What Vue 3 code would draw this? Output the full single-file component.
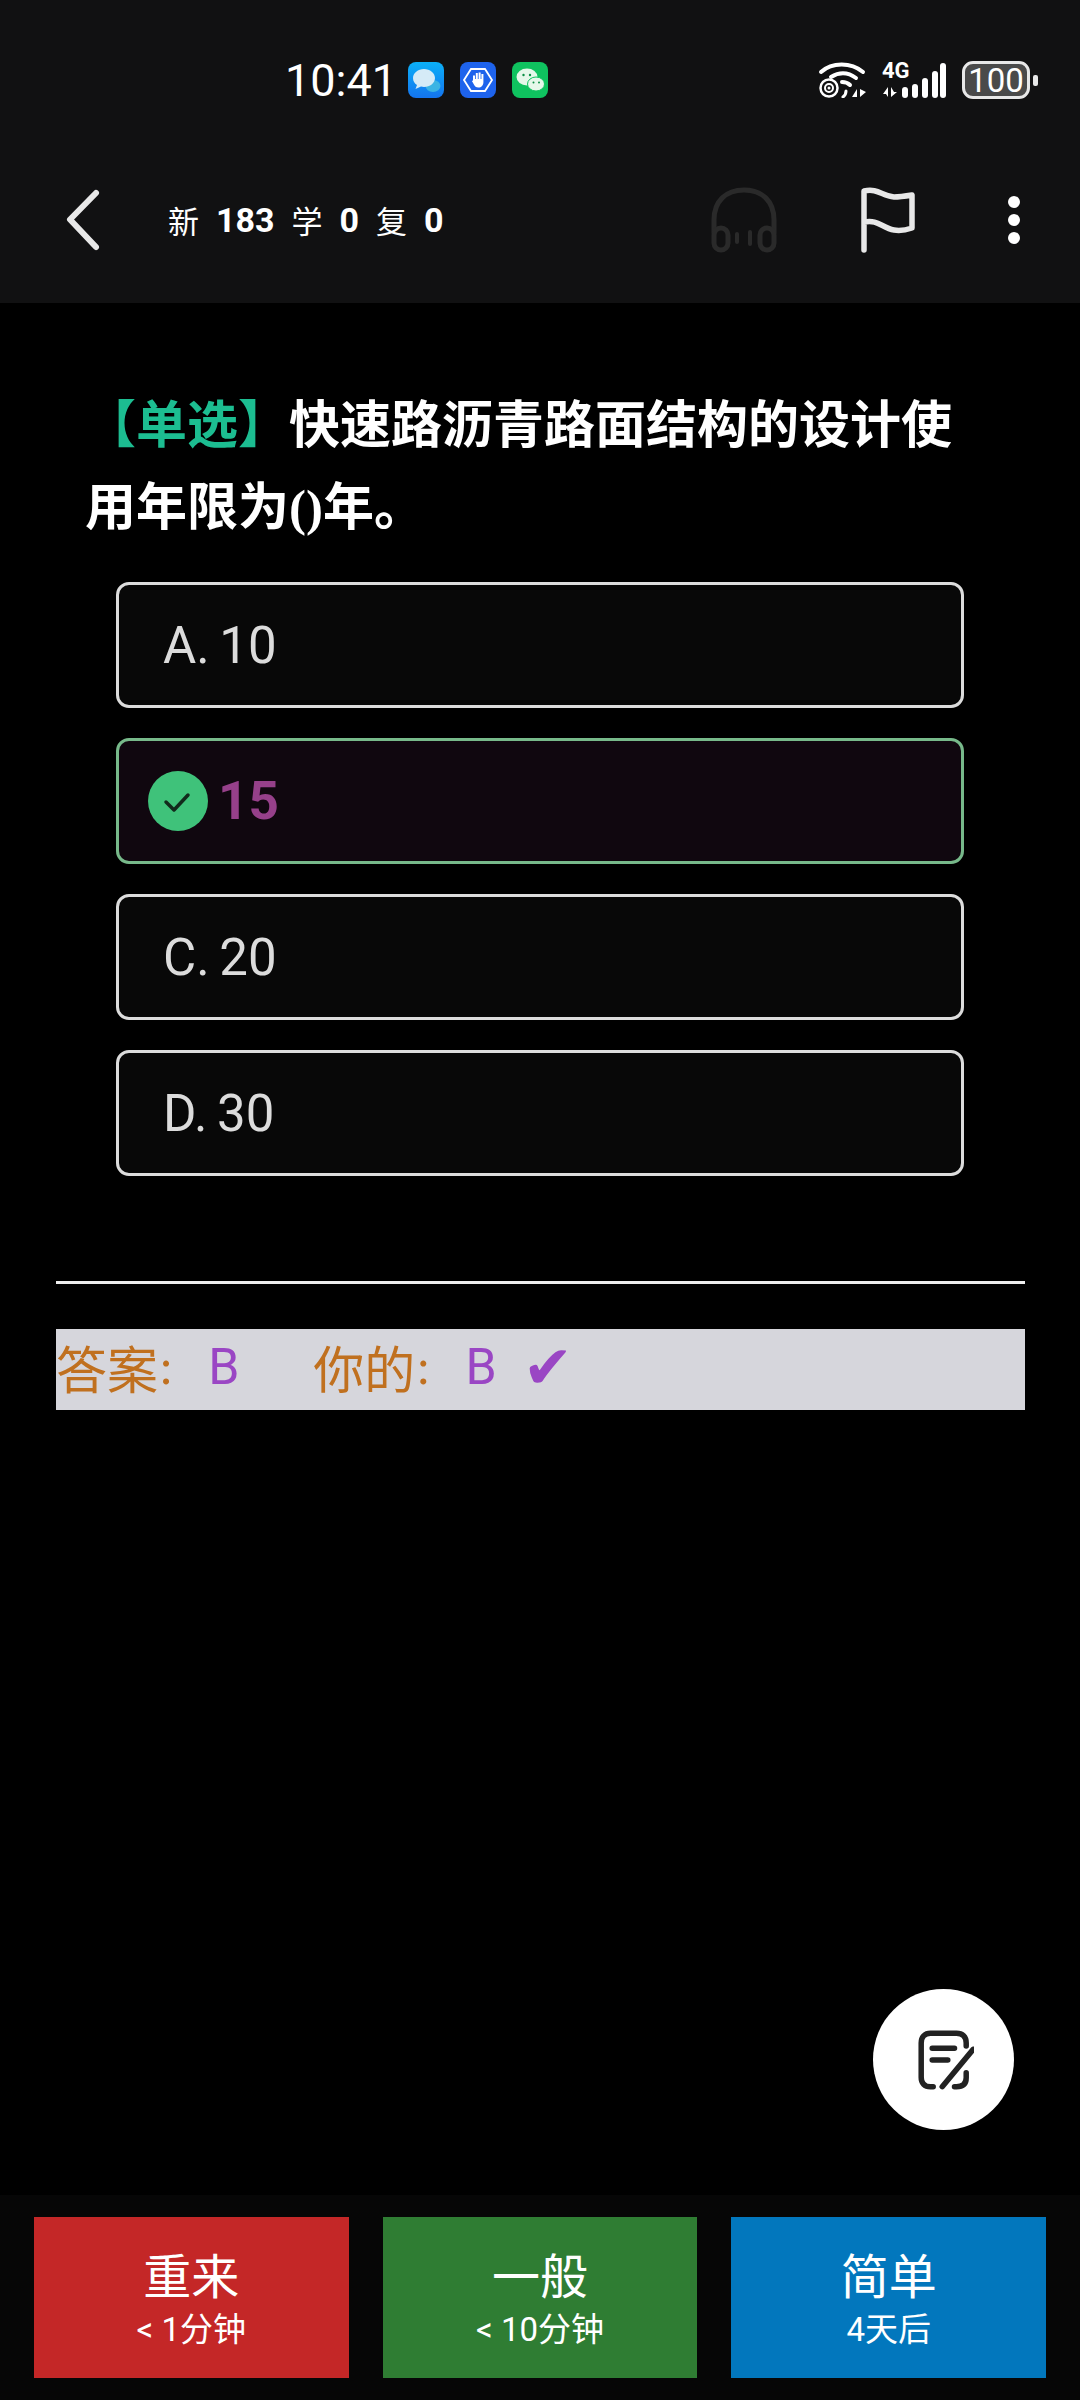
<script setup>
const options = [
  { key: 'A', text: 'A. 10' },
  { key: 'B', text: '15', correct: true },
  { key: 'C', text: 'C. 20' },
  { key: 'D', text: 'D. 30' },
]
const actions = [
  { title: '重来', sub: '< 1分钟', cls: 'red' },
  { title: '一般', sub: '< 10分钟', cls: 'green' },
  { title: '简单', sub: '4天后', cls: 'blue' },
]
</script>

<template>
  <div class="page">
    <header class="head">
      <div class="status">
        <span class="time">10:41</span>
        <div class="apps">
          <svg class="app" viewBox="0 0 36 36"><defs><linearGradient id="msg" x1="0" y1="0" x2="0" y2="1"><stop offset="0" stop-color="#0bb0f8"/><stop offset="1" stop-color="#1474ee"/></linearGradient></defs><rect width="36" height="36" rx="8" fill="url(#msg)"/><ellipse cx="25" cy="24" rx="7.500" ry="6" fill="#3bb4e4"/><path d="M16 7C10 7 5 11 5 16c0 3 1.500 5.500 4 7l-1.500 4 5.500-2.500c1 .3 2 .5 3 .5 6 0 11-4 11-9S22 7 16 7z" fill="#d5ebf7"/></svg>
          <svg class="app" viewBox="0 0 36 36"><rect width="36" height="36" rx="8" fill="#1e63ec"/><path d="M11 7h14l7 11-7 11H11L4 18z" fill="none" stroke="#fff" stroke-width="1.800"/><path d="M13 19v-5.500h2V17h.8v-6h2v6h.8v-6.500h2V17h.8v-5h2v8c0 3.500-2 5.500-5 5.500-2.500 0-3.500-1-4.500-3l-2-3.500c1-1 2-.5 3.100 1z" fill="#fff"/></svg>
          <svg class="app" viewBox="0 0 36 36"><rect width="36" height="36" rx="8" fill="#0fc35f"/><ellipse cx="15" cy="15" rx="10.500" ry="8.500" fill="#e6f8ea"/><ellipse cx="24" cy="22" rx="8.500" ry="7" fill="#e6f8ea" stroke="#0fc35f" stroke-width="1"/><circle cx="11.500" cy="13" r="1.200" fill="#0b8f45"/><circle cx="18" cy="13" r="1.200" fill="#0b8f45"/><circle cx="21.500" cy="20.500" r="1" fill="#0b8f45"/><circle cx="27" cy="20.500" r="1" fill="#0b8f45"/></svg>
        </div>
        <div class="sys">
          <svg class="wifi" width="50" height="36" viewBox="0 0 50 36">
            <g fill="none" stroke="#fff" stroke-linecap="round">
              <path d="M3 10C14 0 33 0 45 10" stroke-width="4"/>
              <path d="M13 15c8-5 17-5 25 1" stroke-width="4"/>
              <path d="M24 20c3 0 6 1 8 3" stroke-width="4"/>
              <circle cx="11" cy="26" r="8.500" stroke-width="2.500"/>
              <circle cx="11" cy="26" r="4" stroke-width="2"/>
              <path d="M25 35c2-1.500 3-4 3-6" stroke-width="3"/>
            </g>
            <circle cx="11" cy="26" r="1.500" fill="#fff"/>
            <path d="M39 35v-8l-5 8zM42 27v8l6-5z" fill="#fff"/>
          </svg>
          <div class="net">
            <span class="g4">4G</span>
            <svg class="arrows" width="16" height="12" viewBox="0 0 16 12"><path d="M6 11V1L1 8h3zM9 1v10l6-5h-3z" fill="#fff"/></svg>
          </div>
          <svg class="signal" width="44" height="35" viewBox="0 0 44 35"><g fill="#fff"><rect x="0" y="24" width="6" height="11" rx="3"/><rect x="10" y="21" width="6" height="14" rx="3"/><rect x="20" y="15" width="6" height="20" rx="3"/><rect x="30" y="8" width="6" height="27" rx="3"/><rect x="38" y="0" width="6" height="35" rx="3"/></g></svg>
          <div class="battery"><span>100</span></div>
          <i class="nub"></i>
        </div>
      </div>
      <div class="toolbar">
        <svg class="back" width="40" height="64" viewBox="0 0 40 64"><path d="M32 5 6 31.500 32 59" fill="none" stroke="#e8e8e8" stroke-width="6" stroke-linecap="round" stroke-linejoin="round"/></svg>
        <div class="stats">
          <span class="cn">新</span><b>183</b><span class="cn">学</span><b>0</b><span class="cn">复</span><b>0</b>
        </div>
        <svg class="phones" width="66" height="66" viewBox="0 0 66 66"><g fill="none" stroke="#2a2a2a" stroke-width="5" stroke-linecap="round"><path d="M3 46V33C3 14 15 3 33 3s30 11 30 30v13"/><rect x="3" y="41" width="14" height="22" rx="7"/><rect x="49" y="41" width="14" height="22" rx="7"/><path d="M26 47v8M39 45v12" stroke-width="4"/></g></svg>
        <svg class="flag" width="54" height="66" viewBox="0 0 54 66"><path d="M3 63V4c14-3 18 5 30 6 6 0 12-1 18-2v33c-6 2-12 3-18 2-12-2-16-11-30-8" fill="none" stroke="#e8e8e8" stroke-width="5.500" stroke-linecap="round" stroke-linejoin="round"/></svg>
        <div class="dots"><i></i><i></i><i></i></div>
      </div>
    </header>

    <main class="main">
      <p class="question"><span class="tag">【单选】</span>快速路沥青路面结构的设计使<br>用年限为()年。</p>
      <ul class="options">
        <li v-for="o in options" :key="o.key" class="option" :class="{ correct: o.correct }">
          <svg v-if="o.correct" class="tick" width="60" height="60" viewBox="0 0 60 60"><circle cx="30" cy="30" r="30" fill="#3fc27a"/><path d="M18 31l8 8 14-15" fill="none" stroke="#122a1c" stroke-width="3.500" stroke-linecap="round" stroke-linejoin="round"/></svg>
          <span>{{ o.text }}</span>
        </li>
      </ul>
      <hr class="rule">
      <div class="answer">
        <span class="lab">答案</span><span class="colon">:</span><span class="val">B</span>
        <span class="lab second">你的</span><span class="colon">:</span><span class="val">B</span><span class="mark">✔</span>
      </div>
    </main>

    <button class="fab" aria-label="note">
      <svg width="60" height="62" viewBox="-2.500 0 60 62"><g fill="none" stroke="#222" stroke-width="5.500" stroke-linecap="round" stroke-linejoin="round"><path d="M16.700 57.700H14c-6 0-9.300-3.500-9.300-9.300V14c0-6 3.500-9.700 9.300-9.700h26c6 0 9.700 3.500 9.700 9.700v3"/><path d="M49.700 43.700v5c0 6-3.500 9-9.700 9h-2"/><path d="M15.700 19.300H38M15.700 31h15.600"/><path d="M25.700 57.700 56.700 20.300"/></g></svg>
    </button>

    <footer class="bar">
      <button v-for="a in actions" :key="a.title" class="act" :class="a.cls">
        <span class="t">{{ a.title }}</span>
        <span class="s">{{ a.sub }}</span>
      </button>
    </footer>
  </div>
</template>

<style>
html, body { margin: 0; background: #000; }
</style>

<style scoped>
.page {
  position: relative;
  width: 1080px;
  height: 2400px;
  display: flex;
  flex-direction: column;
  background: #000;
  font-family: "Roboto", "Noto Sans CJK SC", sans-serif;
  overflow: hidden;
}
.head { height: 303px; background: #111112; flex: none; }
.status { display: flex; align-items: center; padding: 40px 0 0 285px; box-sizing: border-box; height: 120px; }
.time { color: #fff; font-size: 45px; line-height: 1; width: 123px; }
.apps { display: flex; gap: 16px; }
.app { width: 36px; height: 36px; display: block; }
.sys { margin-left: auto; display: flex; align-items: center; padding-right: 42px; }
.wifi { margin-right: 14px; }
.net { display: flex; flex-direction: column; justify-content: space-between; width: 20px; height: 35px; align-items: flex-start; }
.g4 { color: #fff; font-size: 22px; font-weight: 700; line-height: 16px; white-space: nowrap; }
.signal { margin-right: 16px; }
.battery { width: 68px; height: 38px; box-sizing: border-box; border: 3px solid #e8e8e8; border-radius: 11px; background: #4a4a4a; color: #fff; display: flex; align-items: center; justify-content: center; font-size: 33px; line-height: 1; }
.nub { width: 5px; height: 11px; background: #e8e8e8; border-radius: 2px; margin-left: 3px; }
.toolbar { display: flex; align-items: center; box-sizing: border-box; height: 183px; padding: 16px 0 0 64px; }
.back { flex: none; }
.stats { display: flex; align-items: center; color: #fff; margin-left: 64px; gap: 17px; }
.stats .cn { font-size: 31px; }
.stats b { font-size: 34px; font-weight: 700; }
.phones { margin-left: auto; }
.flag { margin-left: 84px; }
.dots { display: flex; flex-direction: column; gap: 6px; margin: 0 60px 0 93px; }
.dots i { width: 12px; height: 12px; border-radius: 50%; background: #fff; display: block; }

.main { flex: 1; padding: 82px 0 0 56px; min-height: 0; }
.question { margin: 0 0 0 29px; color: #fff; font-family: "Liberation Serif", "Noto Sans CJK SC", serif; font-weight: 700; font-size: 51px; line-height: 82px; }
.tag { color: #1cbd91; }
.options { list-style: none; margin: 33px 0 0 60px; padding: 0; width: 848px; display: flex; flex-direction: column; gap: 30px; }
.option { height: 126px; box-sizing: border-box; border: 3px solid #dcdcdc; border-radius: 13px; background: #080808; color: #dcdcdc; font-size: 51px; word-spacing: -3px; display: flex; align-items: center; padding-left: 44px; }
.option.correct { border-color: #77b98a; background: #10070f; color: #96408a; font-weight: 700; font-size: 53px; padding-left: 29px; gap: 10px; }
.rule { border: 0; height: 3px; width: 969px; background: #eee; margin: 105px 0 0; }
.answer { margin-top: 45px; width: 969px; height: 81px; box-sizing: border-box; padding-bottom: 6px; background: #d6d6dc; display: flex; align-items: center; font-size: 51px; }
.lab { color: #c0701f; font-family: "Liberation Serif", "Noto Sans CJK SC", serif; }
.second { margin-left: 74px; }
.colon { color: #c0701f; font-family: "Liberation Serif", serif; margin: 0 35px 0 1px; }
.val { color: #9a46c4; font-family: "Roboto", sans-serif; font-size: 50px; }
.mark { color: #9a46c4; font-family: "DejaVu Sans", sans-serif; font-size: 60px; line-height: 1; margin-left: 26px; }

.fab { position: absolute; left: 873px; top: 1989px; width: 141px; height: 141px; border-radius: 50%; border: 0; padding: 0; background: #fff; display: flex; align-items: center; justify-content: center; }
.bar { flex: none; height: 205px; background: #060606; display: flex; gap: 34px; padding: 22px 34px; box-sizing: border-box; }
.act { flex: 1; border: 0; padding: 6px 0 0; color: #fff; display: flex; flex-direction: column; align-items: center; justify-content: center; font-family: inherit; }
.act .t { font-size: 48px; line-height: 58px; }
.act .s { font-size: 33px; line-height: 46px; }
.red { background: #c42727; }
.green { background: #2f7d33; }
.blue { background: #0277bd; }
</style>
